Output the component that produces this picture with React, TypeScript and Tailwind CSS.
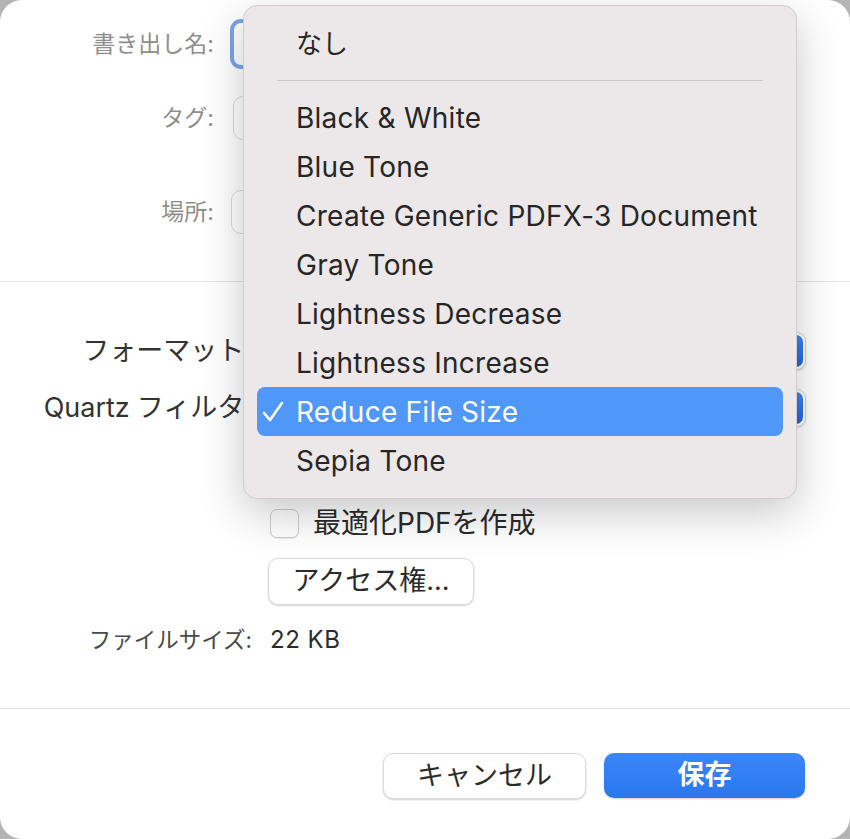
import React from 'react';

const menuItems = [
  'Black & White',
  'Blue Tone',
  'Create Generic PDFX-3 Document',
  'Gray Tone',
  'Lightness Decrease',
  'Lightness Increase',
  'Reduce File Size',
  'Sepia Tone',
];

const font = "font-['Inter','Noto_Sans_CJK_JP',sans-serif]";

function PopupButton() {
  return (
    <div className="flex h-[38px] w-[538px] items-stretch rounded-[9px] border border-[#d6d6d6] bg-white shadow-[0_1px_2px_rgba(0,0,0,0.15)]">
      <div className="flex-1" />
      <div className="m-[2px] w-[32px] rounded-[7px] bg-gradient-to-b from-[#3d86f7] to-[#1f66e0]" />
    </div>
  );
}

export default function App() {
  return (
    <div className={`h-[839px] w-[850px] overflow-hidden bg-[#b4b4b4] ${font}`}>
      <div className="relative flex h-full w-full flex-col rounded-[22px] bg-white">
        {/* top section */}
        <div className="pt-[20px] pb-[47px]">
          <div className="flex h-[48px] items-center">
            <div className="w-[214px] text-right text-[23px] text-[#8e8e8e]">書き出し名:</div>
            <div className="ml-[16px] h-[50px] w-[550px] rounded-[11px] border-[4px] border-[#7ca6ea] bg-white" />
          </div>
          <div className="mt-[28px] flex h-[44px] items-center">
            <div className="w-[214px] text-right text-[23px] text-[#8e8e8e]">タグ:</div>
            <div className="ml-[19px] h-[44px] w-[540px] rounded-[10px] border border-[#d9d9d9] bg-white" />
          </div>
          <div className="mt-[50px] flex h-[44px] items-center">
            <div className="w-[214px] text-right text-[23px] text-[#8e8e8e]">場所:</div>
            <div className="ml-[17px] h-[44px] w-[540px] rounded-[10px] border border-[#d9d9d9] bg-white" />
          </div>
        </div>
        <div className="h-px bg-[#e4e4e4]" />

        {/* format section */}
        <div className="pb-[53px]">
          <div className="mt-[50px] flex h-[38px] items-center">
            <div className="w-[252px] text-right text-[27px] text-[#333]">フォーマット:</div>
            <div className="ml-[16px]">
              <PopupButton />
            </div>
          </div>
          <div className="mt-[19px] flex h-[38px] items-center">
            <div className="w-[252px] text-right text-[27px] text-[#333]">
              Quartz<span className="ml-[7px]">フィルタ:</span>
            </div>
            <div className="ml-[16px]">
              <PopupButton />
            </div>
          </div>
          <div className="mt-[81px] flex h-[30px] items-center pl-[270px]">
            <div className="h-[29px] w-[29px] rounded-[7px] border border-[#cfcfcf] bg-white shadow-[0_1px_1px_rgba(0,0,0,0.08)]" />
            <span className="ml-[14px] text-[28px] text-[#2b2b2b]">最適化PDFを作成</span>
          </div>
          <div className="mt-[20px] pl-[268px]">
            <button className="flex h-[47px] w-[206px] items-center justify-center rounded-[10px] border border-[#dadada] bg-white text-[27px] text-[#2b2b2b] shadow-[0_1px_2px_rgba(0,0,0,0.18)]">
              アクセス権...
            </button>
          </div>
          <div className="mt-[20px] flex h-[30px] items-center">
            <div className="w-[252px] text-right text-[22.5px] text-[#4a4a4a]">ファイルサイズ:</div>
            <div className="ml-[18px] text-[24px] tracking-[0.5px] text-[#2b2b2b]">22 KB</div>
          </div>
        </div>
        <div className="h-px bg-[#e4e4e4]" />

        {/* footer */}
        <div className="flex justify-end gap-[18px] pt-[44px] pr-[45px]">
          <button className="flex h-[46px] w-[203px] items-center justify-center rounded-[10px] border border-[#dadada] bg-white text-[27px] text-[#2b2b2b] shadow-[0_1px_2px_rgba(0,0,0,0.18)]">
            キャンセル
          </button>
          <button className="flex h-[45px] w-[201px] items-center justify-center rounded-[10px] bg-gradient-to-b from-[#3b87f8] to-[#2a76ee] text-[27px] font-semibold text-white shadow-[0_1px_2px_rgba(0,0,0,0.2)]">
            保存
          </button>
        </div>

        {/* Quartz filter menu */}
        <div className="absolute left-[243px] top-[5px] w-[554px] rounded-[14px] border border-[#d2cecf] bg-[#ece8e9] px-[13px] py-[13px] shadow-[0_14px_44px_rgba(0,0,0,0.22)]">
          <div className="flex h-[49px] items-center pl-[39px] text-[26px] text-[#262626]">なし</div>
          <div className="flex h-[25px] items-center px-[20px]">
            <div className="h-px w-full bg-[#cdc9ca]" />
          </div>
          {menuItems.map((item) => {
            const selected = item === 'Reduce File Size';
            return (
              <div
                key={item}
                className={`relative flex h-[49px] items-center pl-[39px] text-[28px] tracking-[0.25px] ${
                  selected ? 'rounded-[8px] bg-[#4f97f8] text-white' : 'text-[#262626]'
                }`}
              >
                {selected && (
                  <svg className="absolute left-[5px] top-[14px]" width="22" height="22" viewBox="0 0 22 22">
                    <path d="M2 12 L8 19 L20 2" fill="none" stroke="white" strokeWidth="2.6" strokeLinecap="round" strokeLinejoin="round" />
                  </svg>
                )}
                {item}
              </div>
            );
          })}
        </div>
      </div>
    </div>
  );
}
